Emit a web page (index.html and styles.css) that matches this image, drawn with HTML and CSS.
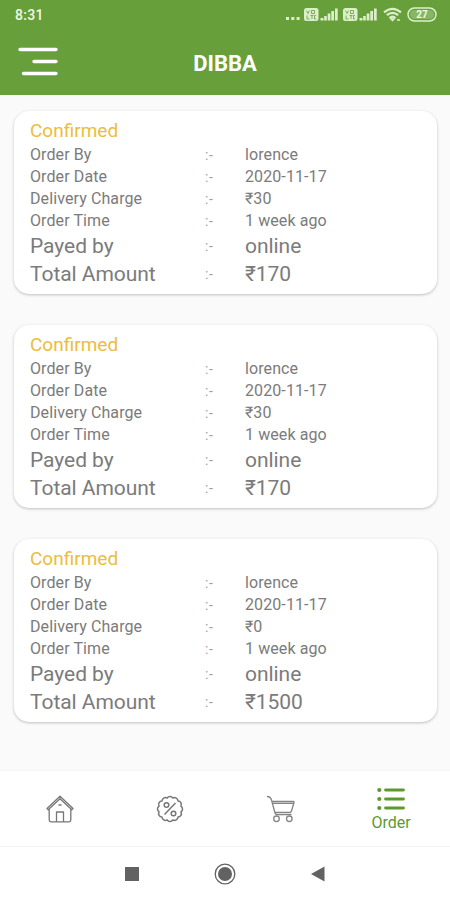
FILE: index.html
```
<!DOCTYPE html>
<html lang="en">
<head>
<meta charset="utf-8">
<title>DIBBA</title>
<link rel="stylesheet" href="styles.css">
</head>
<body>
<header class="header">
  <div class="status">
    <span class="clock">8:31</span>
    <svg class="status-icons" width="152" height="18" viewBox="285 6 152 18">
      <g fill="#dcefca">
        <rect x="286" y="17" width="3" height="3"/><rect x="291.300" y="17" width="3" height="3"/><rect x="296.600" y="17" width="3" height="3"/>
        <g id="sim">
          <rect x="304" y="8" width="14.500" height="13" rx="2.500"/>
          <path d="M306.500 10.500l1.500 3 1.500-3M311.500 13.500v-3h3v3zM307 15.500v3.500h2.500M310.500 15.500h3M312 15.500v3.500M316 15.500h-1.500v3.500h1.500" fill="none" stroke="#67a03a" stroke-width=".8"/>
          <path d="M320.500 18h3v2.500h-3zM324.200 16h2.600v4.500h-2.600zM327.700 13.500h2.700v7h-2.700zM331.300 11h2.700v9.500h-2.700zM335 8.500h2.700v12h-2.700z"/>
        </g>
        <use href="#sim" x="39"/>
      </g>
      <g fill="none" stroke="#dcefca">
        <path d="M384 12.300q8.500-7 17 0M386.800 15.200q5.700-4.700 11.400 0M389.500 18q3-2.500 6 0" stroke-width="2.200"/>
        <path d="M391 19h3l-1.500 1.500zM397 20h3" stroke-width="1.500"/>
        <rect x="408" y="8" width="28" height="13" rx="6.500" stroke-width="1.500"/>
      </g>
      <rect x="410" y="10" width="24" height="9" rx="4.500" fill="#87b765"/>
      <text class="battery" x="422" y="18.200" text-anchor="middle">27</text>
    </svg>
  </div>
  <div class="titlebar">
    <svg class="menu" width="40" height="30" viewBox="0 0 40 30"><path d="M2 2.500h36M16 14.500h22M5.500 26.500H38" stroke="#fff" stroke-width="3.400" stroke-linecap="round"/></svg>
    <h1 class="title">DIBBA</h1>
  </div>
</header>
<main class="orders">
  <section class="card">
    <h2 class="state">Confirmed</h2>
    <div class="row"><span>Order By</span><i>:-</i><span>lorence</span></div>
    <div class="row"><span>Order Date</span><i>:-</i><span>2020-11-17</span></div>
    <div class="row"><span>Delivery Charge</span><i>:-</i><span>₹30</span></div>
    <div class="row"><span>Order Time</span><i>:-</i><span>1 week ago</span></div>
    <div class="row big"><span>Payed by</span><i>:-</i><span>online</span></div>
    <div class="row big"><span>Total Amount</span><i>:-</i><span>₹170</span></div>
  </section>
  <section class="card">
    <h2 class="state">Confirmed</h2>
    <div class="row"><span>Order By</span><i>:-</i><span>lorence</span></div>
    <div class="row"><span>Order Date</span><i>:-</i><span>2020-11-17</span></div>
    <div class="row"><span>Delivery Charge</span><i>:-</i><span>₹30</span></div>
    <div class="row"><span>Order Time</span><i>:-</i><span>1 week ago</span></div>
    <div class="row big"><span>Payed by</span><i>:-</i><span>online</span></div>
    <div class="row big"><span>Total Amount</span><i>:-</i><span>₹170</span></div>
  </section>
  <section class="card">
    <h2 class="state">Confirmed</h2>
    <div class="row"><span>Order By</span><i>:-</i><span>lorence</span></div>
    <div class="row"><span>Order Date</span><i>:-</i><span>2020-11-17</span></div>
    <div class="row"><span>Delivery Charge</span><i>:-</i><span>₹0</span></div>
    <div class="row"><span>Order Time</span><i>:-</i><span>1 week ago</span></div>
    <div class="row big"><span>Payed by</span><i>:-</i><span>online</span></div>
    <div class="row big"><span>Total Amount</span><i>:-</i><span>₹1500</span></div>
  </section>
</main>
<nav class="tabs">
  <a class="tab"><svg width="28" height="28" viewBox="0 0 28 28" fill="none" stroke="#777" stroke-width="1.300" stroke-linejoin="round"><path d="M1 13.500L14 1.200l13 12.300-1.200 1.200L14 3.700 2.200 14.700zM3.200 13.800V25q0 1.800 1.800 1.800h18q1.800 0 1.800-1.800V13.800M10.500 26.500V17h7v9.500M12.500 10h3"/></svg></a>
  <a class="tab"><svg width="28" height="28" viewBox="0 0 28 28" fill="none" stroke="#777" stroke-width="1.500" stroke-linejoin="round"><path d="M24.900 16.900A3.400 3.400 0 0 1 22 22A3.400 3.400 0 0 1 16.900 24.900A3.400 3.400 0 0 1 11.100 24.900A3.400 3.400 0 0 1 6 22A3.400 3.400 0 0 1 3.100 16.900A3.400 3.400 0 0 1 3.100 11.100A3.400 3.400 0 0 1 6 6A3.400 3.400 0 0 1 11.100 3.100A3.400 3.400 0 0 1 16.900 3.100A3.400 3.400 0 0 1 22 6A3.400 3.400 0 0 1 24.900 11.100A3.400 3.400 0 0 1 24.900 16.900zM19.500 8L8.500 19.500"/><circle cx="10.500" cy="10" r="2.300"/><circle cx="17.500" cy="18.500" r="2.300"/></svg></a>
  <a class="tab"><svg width="30" height="28" viewBox="0 0 30 28" fill="none" stroke="#858585" stroke-width="1.300" stroke-linejoin="round"><path d="M1 1.500q3.500 0 4.500 3.500l3.500 13q.5 1.500 2 1.500h14.500M6 6.500h21.500q.8 0 .5 1L25.500 16q-.3 1.300-1.500 1.300H9M6.500 8.300h21"/><circle cx="10.500" cy="23.800" r="2.800"/><circle cx="23.300" cy="23.800" r="2.800"/></svg></a>
  <a class="tab active"><svg width="28" height="24" viewBox="0 0 28 24" fill="none" stroke="#5c9a2e" stroke-width="2.800" stroke-linecap="round"><path d="M8.500 3h18M8.500 12h18M8.500 21h18"/><path d="M2.300 3h.01M2.300 12h.01M2.300 21h.01" stroke-width="4.200"/></svg><span>Order</span></a>
</nav>
<footer class="system">
  <svg width="14" height="14" viewBox="0 0 14 14"><rect width="14" height="14" fill="#626262"/></svg>
  <svg width="22" height="22" viewBox="0 0 22 22"><circle cx="11" cy="11" r="9.800" fill="none" stroke="#626262" stroke-width="1.300"/><circle cx="11" cy="11" r="7" fill="#626262"/></svg>
  <svg width="14" height="16" viewBox="0 0 14 16"><path d="M0 8L13.500.5v15z" fill="#626262"/></svg>
</footer>
</body>
</html>
```
FILE: styles.css
```
* { box-sizing: border-box; }
body {
  margin: 0;
  height: 900px;
  display: flex;
  flex-direction: column;
  overflow: hidden;
  background: #fafafa;
  font-family: Roboto, "Liberation Sans", sans-serif;
  color: #7b7b7b;
}
svg { display: block; }
.header { height: 95px; background: #67a03a; color: #fff; }
.status {
  height: 30px;
  padding: 0 13px 0 15px;
  display: flex;
  align-items: center;
  justify-content: space-between;
}
.clock { font-size: 14px; font-weight: 500; letter-spacing: .3px; color: #f0f8e8; }
.battery { font-size: 10px; font-weight: 700; fill: #eef7e5; }
.titlebar {
  height: 65px;
  display: grid;
  grid-template-columns: 60px 1fr 60px;
  align-items: center;
}
.menu { margin: -1px 0 0 18px; }
.title { margin: 0; padding-top: 2px; text-align: center; font-size: 22px; font-weight: 700; line-height: 26px; }
.orders {
  flex: 1;
  padding: 16px 13px 0 14px;
  display: flex;
  flex-direction: column;
  gap: 31px;
}
.card {
  height: 183px;
  padding: 7px 16px;
  border-radius: 15px;
  background: #fff;
  box-shadow: 0 1px 3px rgba(0, 0, 0, .24);
}
.state { margin: 0; font-size: 19px; font-weight: 400; line-height: 26px; color: #edbd3a; }
.row {
  display: grid;
  grid-template-columns: 175px 40px 1fr;
  font-size: 16px;
  line-height: 22px;
  letter-spacing: .1px;
}
.row i { font-style: normal; font-size: 14px; letter-spacing: .5px; color: #a0a0a0; }
.row.big { font-size: 21px; line-height: 28px; letter-spacing: -.05px; }
.tabs {
  height: 77px;
  display: grid;
  grid-template-columns: 120px 100px 122px 98px;
  background: #fff;
  border-top: 1px solid #f5f5f5;
  border-bottom: 1px solid #f5f5f5;
}
.tab { display: flex; flex-direction: column; align-items: center; justify-content: center; }
.active { padding-top: 3px; color: #5c9a2e; font-size: 16px; line-height: 20px; gap: 2px; }
.system {
  height: 53px;
  padding: 0 125px;
  display: flex;
  align-items: center;
  justify-content: space-between;
  background: #fff;
}
```
